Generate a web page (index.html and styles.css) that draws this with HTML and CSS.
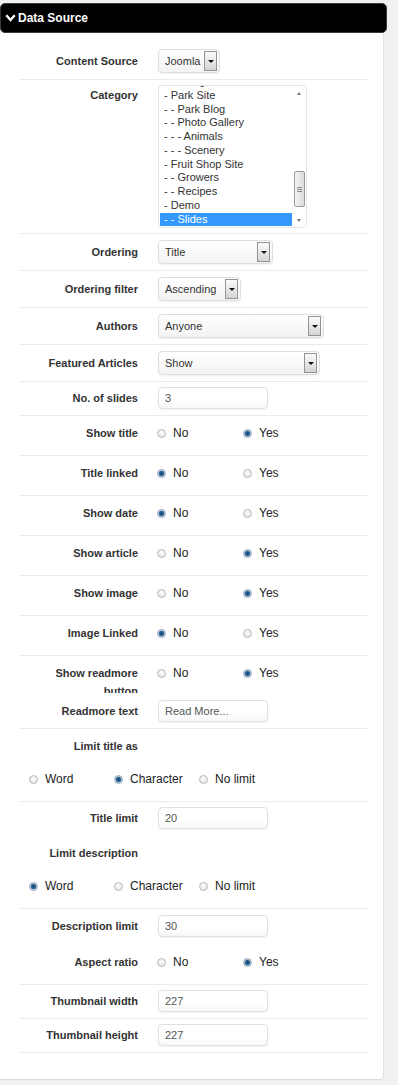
FILE: index.html
```html
<!DOCTYPE html>
<html lang="en">
<head>
  <meta charset="UTF-8" />
  <title>Data Source</title>
  <link rel="stylesheet" href="styles.css">
</head>
<body>
  <div class="page">
    <div class="panel-head">
      <svg class="chevron" width="11" height="8" viewBox="0 0 11 8"><polyline points="1.3,1.3 5.5,6 9.7,1.3" fill="none" stroke="#fff" stroke-width="2.4"/></svg>
      <span>Data Source</span>
    </div>

    <div class="panel">
      <div class="row row-select">
        <div class="label">Content Source</div>
        <div class="control"><div class="select sel-xs"><span>Joomla</span><i class="arrow"></i></div></div>
      </div>

      <div class="row row-list">
        <div class="label">Category</div>
        <div class="control">
          <div class="listbox">
            <div class="list-items">
              <div class="item first">- - Using Joomla!</div>
              <div class="item">- Park Site</div>
              <div class="item">- - Park Blog</div>
              <div class="item">- - Photo Gallery</div>
              <div class="item">- - - Animals</div>
              <div class="item">- - - Scenery</div>
              <div class="item">- Fruit Shop Site</div>
              <div class="item">- - Growers</div>
              <div class="item">- - Recipes</div>
              <div class="item">- Demo</div>
              <div class="item selected">- - Slides</div>
            </div>
            <div class="scrollbar">
              <div class="sb-btn up"></div>
              <div class="sb-track"><div class="sb-thumb"></div></div>
              <div class="sb-btn down"></div>
            </div>
          </div>
        </div>
      </div>

      <div class="row row-select">
        <div class="label">Ordering</div>
        <div class="control"><div class="select sel-md"><span>Title</span><i class="arrow"></i></div></div>
      </div>

      <div class="row row-select">
        <div class="label">Ordering filter</div>
        <div class="control"><div class="select sel-sm"><span>Ascending</span><i class="arrow"></i></div></div>
      </div>

      <div class="row row-select">
        <div class="label">Authors</div>
        <div class="control"><div class="select sel-xl"><span>Anyone</span><i class="arrow"></i></div></div>
      </div>

      <div class="row row-select">
        <div class="label">Featured Articles</div>
        <div class="control"><div class="select sel-lg"><span>Show</span><i class="arrow"></i></div></div>
      </div>

      <div class="row row-input">
        <div class="label">No. of slides</div>
        <div class="control"><div class="input">3</div></div>
      </div>

      <div class="row row-radio">
        <div class="label">Show title</div>
        <div class="control radios">
          <label class="opt"><i class="radio"></i>No</label>
          <label class="opt"><i class="radio on"></i>Yes</label>
        </div>
      </div>

      <div class="row row-radio">
        <div class="label">Title linked</div>
        <div class="control radios">
          <label class="opt"><i class="radio on"></i>No</label>
          <label class="opt"><i class="radio"></i>Yes</label>
        </div>
      </div>

      <div class="row row-radio">
        <div class="label">Show date</div>
        <div class="control radios">
          <label class="opt"><i class="radio on"></i>No</label>
          <label class="opt"><i class="radio"></i>Yes</label>
        </div>
      </div>

      <div class="row row-radio">
        <div class="label">Show article</div>
        <div class="control radios">
          <label class="opt"><i class="radio"></i>No</label>
          <label class="opt"><i class="radio on"></i>Yes</label>
        </div>
      </div>

      <div class="row row-radio">
        <div class="label">Show image</div>
        <div class="control radios">
          <label class="opt"><i class="radio"></i>No</label>
          <label class="opt"><i class="radio on"></i>Yes</label>
        </div>
      </div>

      <div class="row row-radio">
        <div class="label">Image Linked</div>
        <div class="control radios">
          <label class="opt"><i class="radio on"></i>No</label>
          <label class="opt"><i class="radio"></i>Yes</label>
        </div>
      </div>

      <div class="row row-radio no-line">
        <div class="label clip">Show readmore button</div>
        <div class="control radios">
          <label class="opt"><i class="radio"></i>No</label>
          <label class="opt"><i class="radio on"></i>Yes</label>
        </div>
      </div>

      <div class="row row-input">
        <div class="label">Readmore text</div>
        <div class="control"><div class="input">Read More...</div></div>
      </div>

      <div class="row row-group">
        <div class="label">Limit title as</div>
        <div class="radios wide">
          <label class="opt"><i class="radio"></i>Word</label>
          <label class="opt"><i class="radio on"></i>Character</label>
          <label class="opt"><i class="radio"></i>No limit</label>
        </div>
      </div>

      <div class="row row-input no-line">
        <div class="label">Title limit</div>
        <div class="control"><div class="input">20</div></div>
      </div>

      <div class="row row-group">
        <div class="label">Limit description</div>
        <div class="radios wide">
          <label class="opt"><i class="radio on"></i>Word</label>
          <label class="opt"><i class="radio"></i>Character</label>
          <label class="opt"><i class="radio"></i>No limit</label>
        </div>
      </div>

      <div class="row row-input tall no-line">
        <div class="label">Description limit</div>
        <div class="control"><div class="input">30</div></div>
      </div>

      <div class="row row-radio">
        <div class="label">Aspect ratio</div>
        <div class="control radios">
          <label class="opt"><i class="radio"></i>No</label>
          <label class="opt"><i class="radio on"></i>Yes</label>
        </div>
      </div>

      <div class="row row-input">
        <div class="label">Thumbnail width</div>
        <div class="control"><div class="input">227</div></div>
      </div>

      <div class="row row-input">
        <div class="label">Thumbnail height</div>
        <div class="control"><div class="input">227</div></div>
      </div>
    </div>
  </div>
</body>
</html>
```

FILE: styles.css
```css
body {
  margin: 0;
  background: #f1f1f1;
  font-family: 'Liberation Sans', Arial, sans-serif;
  color: #333;
}

.page {
  padding-top: 3px;
  width: 387px;
}

.panel-head {
  height: 28px;
  background: #000;
  border: 1px solid #3a3a3a;
  border-radius: 5px;
  display: flex;
  align-items: center;
  padding-left: 4px;
  color: #fff;
  font-size: 12px;
  font-weight: bold;
}

.chevron {
  margin-right: 2px;
}

.panel {
  width: 383px;
  background: #fff;
  border-right: 1px solid #e2e2e2;
  border-bottom: 1px solid #dcdcdc;
  border-radius: 0 0 4px 0;
  padding: 10px 0 26px;
}

.row {
  display: flex;
  align-items: flex-start;
  margin: 0 16px 0 20px;
  border-bottom: 1px solid #ebebeb;
}

.row.no-line {
  border-bottom: none;
}

.label {
  width: 118px;
  flex: none;
  text-align: right;
  font-size: 11px;
  font-weight: bold;
  line-height: 18px;
  color: #333;
}

.label.clip {
  height: 29px;
  overflow: hidden;
}

.control {
  margin-left: 20px;
}

/* row types */
.row-select {
  padding: 6px 0;
}
.row-select .label {
  padding-top: 3px;
}

.row-list {
  padding: 5px 0;
}
.row-list .label {
  padding-top: 1px;
}

.row-input {
  padding: 5px 0 6px;
}
.row-input.no-line {
  padding-bottom: 7px;
}
.row-input.tall {
  padding: 6px 0 7px;
}
.row-input.tall.no-line {
  padding-bottom: 8px;
}
.row-input .label {
  padding-top: 2px;
}

.row-radio {
  height: 31px;
  padding-top: 8px;
}

.row-group {
  flex-direction: column;
  padding: 8px 0 13px;
}

/* select */
.select {
  box-sizing: border-box;
  height: 24px;
  border: 1px solid #dedede;
  border-radius: 4px;
  background: linear-gradient(#fff, #f3f3f3);
  box-shadow: 0 1px 2px rgba(0, 0, 0, 0.06);
  display: flex;
  align-items: center;
  justify-content: space-between;
  padding: 0 2px 0 6px;
  font-size: 11px;
  color: #333;
  white-space: nowrap;
}

.sel-xs { width: 62px; }
.sel-sm { width: 83px; }
.sel-md { width: 115px; }
.sel-lg { width: 162px; }
.sel-xl { width: 166px; }

.arrow {
  flex: none;
  width: 11px;
  height: 18px;
  border: 1px solid #939393;
  background: linear-gradient(#fbfbfb, #d4d4d4);
  display: flex;
  align-items: center;
  justify-content: center;
}

.arrow::after {
  content: "";
  border-left: 3px solid transparent;
  border-right: 3px solid transparent;
  border-top: 3px solid #111;
}

/* listbox */
.listbox {
  width: 149px;
  height: 143px;
  box-sizing: border-box;
  border: 1px solid #e6e6e6;
  border-radius: 4px;
  display: flex;
  background: #fff;
}

.list-items {
  flex: 1;
  overflow: hidden;
  padding-left: 1px;
}

.item {
  font-size: 11px;
  line-height: 13.75px;
  padding-left: 4px;
  color: #333;
  white-space: nowrap;
}

.item.first {
  margin-top: -11px;
}

.item.selected {
  background: #3399ff;
  color: #fff;
}

.scrollbar {
  width: 14px;
  display: flex;
  flex-direction: column;
}

.sb-btn {
  height: 14px;
  display: flex;
  align-items: center;
  justify-content: center;
}

.sb-btn.up::after {
  content: "";
  border-left: 2.5px solid transparent;
  border-right: 2.5px solid transparent;
  border-bottom: 3px solid #777;
}

.sb-btn.down::after {
  content: "";
  border-left: 2.5px solid transparent;
  border-right: 2.5px solid transparent;
  border-top: 3px solid #777;
}

.sb-track {
  flex: 1;
}

.sb-thumb {
  margin: 71px 1px 0 2px;
  height: 36px;
  box-sizing: border-box;
  border: 1px solid #9a9a9a;
  border-radius: 2px;
  background: linear-gradient(90deg, #f4f4f4, #dcdcdc);
  display: flex;
  align-items: center;
  justify-content: center;
}

.sb-thumb::after {
  content: "";
  width: 5px;
  height: 5px;
  background: repeating-linear-gradient(#8a8a8a 0 1px, transparent 1px 2px);
}

/* text input */
.input {
  width: 110px;
  height: 22px;
  box-sizing: border-box;
  border: 1px solid #e0e0e0;
  border-radius: 4px;
  background: linear-gradient(#fff 60%, #f7f7f7);
  box-shadow: 0 1px 2px rgba(0, 0, 0, 0.05);
  padding: 0 6px;
  font-size: 11px;
  line-height: 20px;
  color: #555;
}

/* radios */
.radios {
  display: flex;
}

.radios.wide {
  margin: 15px 0 0 10px;
}

.opt {
  width: 86px;
  flex: none;
  display: flex;
  align-items: center;
  font-size: 12px;
  line-height: 18px;
  color: #222;
}

.radios.wide .opt {
  width: 85px;
}

.radio {
  width: 9px;
  height: 9px;
  box-sizing: border-box;
  border: 1px solid #b9b9b9;
  border-radius: 50%;
  background: radial-gradient(circle at 50% 40%, #fdfdfd, #dedede);
  margin: 0 7px 0 -1px;
}

.radio.on {
  border-color: #8fa6bb;
  background: radial-gradient(circle, #1d5485 0 2px, #6f95b7 2.6px, #e6edf3 3.4px);
}
```
